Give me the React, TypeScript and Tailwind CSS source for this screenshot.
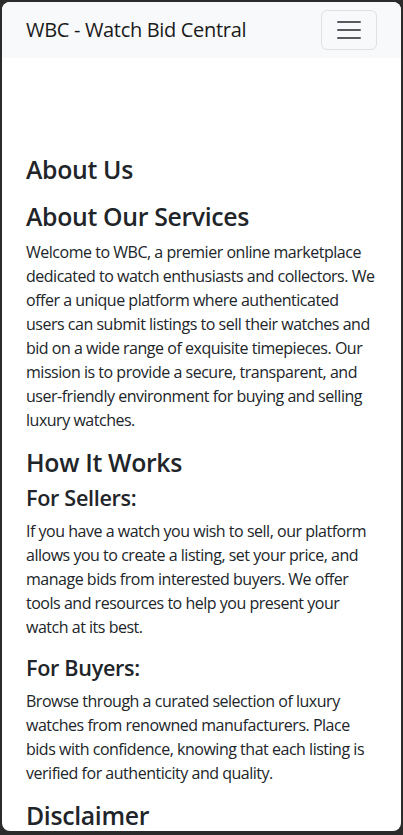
import { ReactNode } from "react";

const H2 = ({ children, className = "" }: { children: ReactNode; className?: string }) => (
  <h2 className={`text-[24.8px] leading-[1.2] font-semibold ${className}`}>{children}</h2>
);

const H4 = ({ children }: { children: ReactNode }) => (
  <h4 className="text-[21.6px] leading-[1.2] font-semibold mb-2">{children}</h4>
);

const P = ({ children }: { children: ReactNode }) => (
  <p className="text-base leading-6 tracking-[-0.03em] mb-4">{children}</p>
);

export default function App() {
  return (
    <div className="h-[835px] overflow-hidden bg-[#2b2b2b] pt-[2px] pl-[2px] pr-[2px] pb-[4px] font-['Segoe_UI','Open_Sans',sans-serif] tracking-[-0.02em] text-[#212529]">
      <div className="h-full overflow-hidden rounded-[8px] bg-white">
        <nav className="flex h-14 items-center justify-between bg-[#f8f9fa] px-6">
          <a className="text-xl leading-[30px] text-[#1a1a1a]">WBC - Watch Bid Central</a>
          <button className="flex h-10 w-14 items-center justify-center rounded-md border border-[#dfe0e1]">
            <svg width="30" height="30" viewBox="0 0 30 30">
              <path
                d="M4 7h22M4 15h22M4 23h22"
                stroke="rgba(33,37,41,0.75)"
                strokeWidth="2"
                strokeLinecap="round"
              />
            </svg>
          </button>
        </nav>

        <main className="px-6 pt-[97px]">
          <H2 className="mb-[17px]">About Us</H2>

          <section>
            <H2 className="mb-2">About Our Services</H2>
            <P>
              Welcome to WBC, a premier online marketplace dedicated to watch enthusiasts and
              collectors. We offer a unique platform where authenticated users can submit listings
              to sell their watches and bid on a wide range of exquisite timepieces. Our mission is
              to provide a secure, transparent, and user-friendly environment for buying and selling
              luxury watches.
            </P>
          </section>

          <section>
            <H2 className="mb-2">How It Works</H2>
            <H4>For Sellers:</H4>
            <P>
              If you have a watch you wish to sell, our platform allows you to create a listing, set
              your price, and manage bids from interested buyers. We offer tools and resources to
              help you present your watch at its best.
            </P>
            <H4>For Buyers:</H4>
            <P>
              Browse through a curated selection of luxury watches from renowned manufacturers.
              Place bids with confidence, knowing that each listing is verified for authenticity and
              quality.
            </P>
          </section>

          <section>
            <H2>Disclaimer</H2>
          </section>
        </main>
      </div>
    </div>
  );
}
